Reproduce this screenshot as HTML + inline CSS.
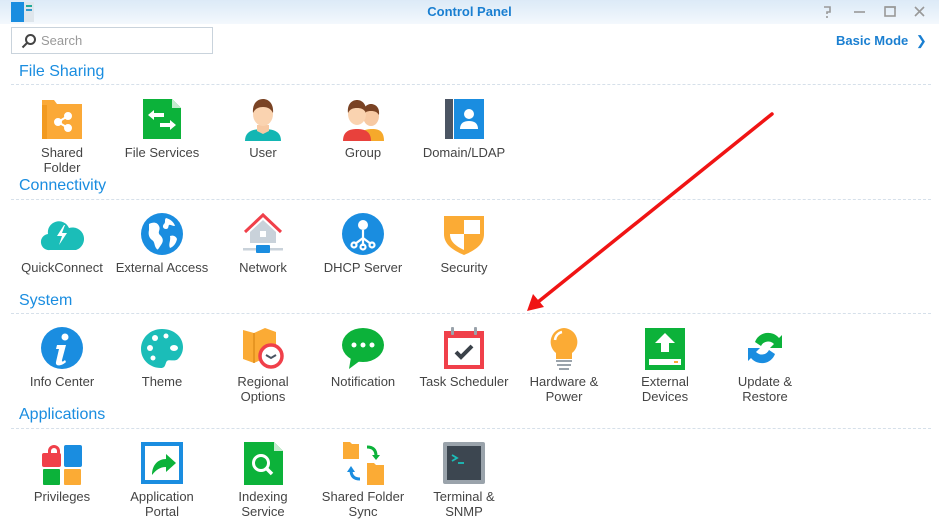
<!DOCTYPE html>
<html><head><meta charset="utf-8"><style>
*{margin:0;padding:0;box-sizing:border-box}
body{width:939px;height:531px;overflow:hidden;background:#fff;font-family:"Liberation Sans",sans-serif;position:relative}
.tb{position:absolute;left:0;top:0;width:939px;height:24px;background:linear-gradient(#dceaf7,#f3f8fd)}
.title{position:absolute;top:4px;left:0;width:939px;text-align:center;font-weight:bold;font-size:13px;color:#1a7fd1}
.search{position:absolute;left:11px;top:27px;width:202px;height:27px;border:1px solid #c9d3dc;background:#fff}
.search span{position:absolute;left:29px;top:5px;font-size:13px;color:#999}
.bm{position:absolute;left:836px;top:33px;font-size:13px;font-weight:bold;color:#1a7fd1}
.h{position:absolute;left:19px;font-size:16px;color:#1a8de0}
.line{position:absolute;left:11px;width:920px;border-top:1px dashed #d6e0ea}
.c{position:absolute;width:100px;text-align:center;font-size:13px;color:#444;line-height:15px}
.c svg{display:block;margin:0 auto 4px;width:44px;height:44px}
</style></head><body>
<div class="tb"></div>
<svg style="position:absolute;left:11px;top:2px" width="24" height="20"><rect x="0" y="0" width="13" height="20" fill="#1a8de0"/><rect x="13" y="0" width="10" height="20" fill="#dfe6ec"/><rect x="15" y="3" width="6" height="2" fill="#2a9"/><rect x="15" y="7" width="6" height="2" fill="#39c"/></svg>
<div class="title">Control Panel</div>
<svg style="position:absolute;left:820px;top:4px" width="110" height="16" fill="none" stroke="#999" stroke-width="1.6"><path d="M4 3h6v5H7v2M7 12v2"/><path d="M34 8h11"/><rect x="65" y="3" width="10" height="9"/><path d="M65 3h10v2"/><path d="M95 3l9 9M104 3l-9 9"/></svg>
<div class="search"><svg style="position:absolute;left:9px;top:5px" width="16" height="16" fill="none" stroke="#444" stroke-width="2"><circle cx="9.5" cy="6.5" r="4.5"/><path d="M6 10l-4.5 4.5"/></svg><span>Search</span></div>
<div class="bm">Basic Mode <span style="font-weight:normal;margin-left:4px">&#x276F;</span></div>

<div class="h" style="top:63px">File Sharing</div><div class="line" style="top:84px"></div>
<div class="h" style="top:177px">Connectivity</div><div class="line" style="top:199px"></div>
<div class="h" style="top:292px">System</div><div class="line" style="top:313px"></div>
<div class="h" style="top:406px">Applications</div><div class="line" style="top:428px"></div>

<!-- row1 -->
<div class="c" style="left:12px;top:97px"><svg viewBox="0 0 44 44"><path d="M2 3h12l3 4h25v35H2z" fill="#fba937"/><rect x="2" y="8" width="5" height="34" fill="#f29a20"/><g fill="#fff" stroke="#fff" stroke-width="2"><circle cx="18" cy="25" r="3"/><circle cx="28" cy="19" r="3"/><circle cx="28" cy="31" r="3"/><path d="M18 25l10-6M18 25l10 6"/></g></svg>Shared<br>Folder</div>
<div class="c" style="left:112px;top:97px"><svg viewBox="0 0 44 44"><path d="M3 2h29l9 9v31H3z" fill="#0cb23a"/><path d="M32 2v9h9" fill="#c5eccf"/><path d="M8 18l6-5v3h10v4H14v3zM36 28l-6-5v3H20v4h10v3z" fill="#fff"/></svg>File Services</div>
<div class="c" style="left:213px;top:97px"><svg viewBox="0 0 44 44"><path d="M4 44c0-10 8-12 18-12s18 2 18 12z" fill="#13b6b3"/><path d="M16 28h12v6l-6 3-6-3z" fill="#f7c9a3"/><ellipse cx="22" cy="17" rx="10" ry="12" fill="#fad3b0"/><path d="M12 16c-1-10 5-14 10-14s11 4 10 14c-2-4-5-6-10-6s-8 2-10 6z" fill="#7a4324"/></svg>User</div>
<div class="c" style="left:313px;top:97px"><svg viewBox="0 0 44 44"><path d="M18 44c0-10 6-12 13-12s12 2 12 12z" fill="#f6a92b"/><ellipse cx="30" cy="19" rx="8" ry="10" fill="#f7c9a3"/><path d="M22 18c0-8 4-11 8-11s9 3 8 11c-2-3-4-4-8-4s-6 1-8 4z" fill="#7a4324"/><path d="M2 44c0-10 7-12 14-12s14 2 14 12z" fill="#e8413c"/><ellipse cx="16" cy="17" rx="9" ry="11" fill="#fad3b0"/><path d="M7 16c-1-9 4-13 9-13s10 4 9 13c-2-4-5-5-9-5s-7 1-9 5z" fill="#7a4324"/></svg>Group</div>
<div class="c" style="left:414px;top:97px"><svg viewBox="0 0 44 44"><rect x="3" y="2" width="8" height="40" fill="#4b5563"/><rect x="12" y="2" width="30" height="40" fill="#1a8de0"/><circle cx="27" cy="17" r="5" fill="#fff"/><path d="M18 32c0-6 4-8 9-8s9 2 9 8z" fill="#fff"/></svg>Domain/LDAP</div>

<!-- row2 -->
<div class="c" style="left:12px;top:212px"><svg viewBox="0 0 44 44"><path d="M10 38a8 8 0 0 1-2-16a11 11 0 0 1 21-6a9 9 0 0 1 7 22z" fill="#1bbdb8"/><path d="M24 13l-7 11h5l-3 9 8-12h-5l3-8z" fill="#fff"/></svg>QuickConnect</div>
<div class="c" style="left:112px;top:212px"><svg viewBox="0 0 44 44"><circle cx="22" cy="22" r="21" fill="#1a8de0"/><path d="M9 12c4-2 8-2 10 2s-2 6 1 9 4 6 1 10-3 6-5 3-1-6-4-8-4-6-3-10zM26 6c4 1 8 4 9 8-3 0-5-2-6-1s0 4-3 4-4-3-2-5 0-4 2-6zM30 24c3-1 6 0 7 3-1 5-4 8-7 9-2-4 1-7 0-12z" fill="#fff"/></svg>External Access</div>
<div class="c" style="left:213px;top:212px"><svg viewBox="0 0 44 44"><path d="M9 20L22 8l13 12v11H9z" fill="#c9d2da"/><path d="M4 20L22 3l18 17" fill="none" stroke="#f0404a" stroke-width="3"/><rect x="19" y="19" width="6" height="6" fill="#fff"/><rect x="2" y="36" width="40" height="2.5" fill="#c9d2da"/><rect x="15" y="33" width="14" height="8" rx="1" fill="#1a8de0"/></svg>Network</div>
<div class="c" style="left:313px;top:212px"><svg viewBox="0 0 44 44"><circle cx="22" cy="22" r="21" fill="#1a8de0"/><g fill="none" stroke="#fff" stroke-width="2.2"><path d="M22 18v8M22 26l-8 6M22 26l8 6M22 26v8"/><circle cx="13" cy="33" r="2.5"/><circle cx="31" cy="33" r="2.5"/><circle cx="22" cy="35" r="2.5"/></g><circle cx="22" cy="13" r="5" fill="#fff"/></svg>DHCP Server</div>
<div class="c" style="left:414px;top:212px"><svg viewBox="0 0 44 44"><path d="M2 4h40v18c0 10-8 16-20 21C10 38 2 32 2 22z" fill="#fbab35"/><path d="M22 8h16v14H22zM8 22h14v16c-8-4-14-8-14-16z" fill="#fff"/></svg>Security</div>

<!-- row3 -->
<div class="c" style="left:12px;top:326px"><svg viewBox="0 0 44 44"><circle cx="22" cy="22" r="21" fill="#1a8de0"/><circle cx="25" cy="11" r="3.5" fill="#fff"/><path d="M17 19h9l-4 15c-.5 2 1 2 3 0l1 2c-4 4-11 5-10 0l3-13h-3z" fill="#fff"/></svg>Info Center</div>
<div class="c" style="left:112px;top:326px"><svg viewBox="0 0 44 44"><path d="M22 3C10 3 1 12 1 23s9 19 20 19c5 0 4-5 6-7s8 1 11-2 5-7 5-12C43 11 34 3 22 3z" fill="#1bbdb8"/><g fill="#fff"><circle cx="10" cy="22" r="3"/><circle cx="15" cy="12" r="3"/><circle cx="26" cy="10" r="2.5"/><ellipse cx="34" cy="22" rx="4" ry="3"/><circle cx="13" cy="32" r="2.5"/></g></svg>Theme</div>
<div class="c" style="left:213px;top:326px"><svg viewBox="0 0 44 44"><path d="M2 4l11 3 11-5 11 4v30l-11-4-11 5-11-4z" fill="#fbab35"/><path d="M13 7v30" stroke="#e08e1c" stroke-width="1.5"/><circle cx="30" cy="30" r="11" fill="#fff" stroke="#f0404a" stroke-width="3.5"/><path d="M25 29l5 3 5-3" fill="none" stroke="#4b5563" stroke-width="2"/></svg>Regional<br>Options</div>
<div class="c" style="left:313px;top:326px"><svg viewBox="0 0 44 44"><ellipse cx="22" cy="19" rx="21" ry="17" fill="#0cb23a"/><path d="M10 31l-2 12 12-9z" fill="#0cb23a"/><g fill="#fff"><circle cx="13" cy="19" r="2.5"/><circle cx="22" cy="19" r="2.5"/><circle cx="31" cy="19" r="2.5"/></g></svg>Notification</div>
<div class="c" style="left:414px;top:326px"><svg viewBox="0 0 44 44"><rect x="2" y="5" width="40" height="38" fill="#f0404a"/><rect x="6" y="12" width="32" height="27" fill="#fff"/><rect x="9" y="1" width="3" height="8" rx="1" fill="#9aa3ab"/><rect x="32" y="1" width="3" height="8" rx="1" fill="#9aa3ab"/><path d="M14 26l5 5 11-11" fill="none" stroke="#3a4149" stroke-width="4"/></svg>Task Scheduler</div>
<div class="c" style="left:514px;top:326px"><svg viewBox="0 0 44 44"><path d="M22 2a14 14 0 0 0-8 25v6h16v-6A14 14 0 0 0 22 2z" fill="#fbab35"/><path d="M13 14a9 9 0 0 1 7-8" fill="none" stroke="#fff" stroke-width="2.5"/><rect x="14" y="34" width="16" height="2" fill="#9aa3ab"/><rect x="15" y="38" width="14" height="2" fill="#9aa3ab"/><rect x="17" y="42" width="10" height="2" fill="#9aa3ab"/></svg>Hardware &amp;<br>Power</div>
<div class="c" style="left:615px;top:326px"><svg viewBox="0 0 44 44"><rect x="2" y="2" width="40" height="42" fill="#0cb23a"/><path d="M22 7l10 10h-6v9h-8v-9h-6z" fill="#fff"/><rect x="6" y="33" width="32" height="6" fill="#fff"/><rect x="31" y="35" width="4" height="2" fill="#fbab35"/></svg>External<br>Devices</div>
<div class="c" style="left:715px;top:326px"><svg viewBox="0 0 44 44"><path d="M10 16a14 14 0 0 1 24-4l3-3v13h-12l4-4a8 8 0 0 0-13 2z" fill="#0cb23a" transform="translate(2 0)"/><path d="M34 28a14 14 0 0 1-24 4l-3 3V22h12l-4 4a8 8 0 0 0 13-2z" fill="#1a8de0" transform="translate(-2 0)"/></svg>Update &amp;<br>Restore</div>

<!-- row4 -->
<div class="c" style="left:12px;top:441px"><svg viewBox="0 0 44 44"><path d="M8 10a6 6 0 0 1 12 0v3h-3v-3a3 3 0 0 0-6 0v3H8z" fill="#f0404a"/><rect x="2" y="12" width="19" height="14" rx="2" fill="#f0404a"/><rect x="24" y="4" width="18" height="22" rx="2" fill="#1a8de0"/><rect x="3" y="28" width="17" height="16" rx="1" fill="#0cb23a"/><rect x="24" y="28" width="17" height="16" rx="1" fill="#fbab35"/></svg>Privileges</div>
<div class="c" style="left:112px;top:441px"><svg viewBox="0 0 44 44"><rect x="1" y="1" width="42" height="42" fill="#1a8de0"/><rect x="5" y="5" width="34" height="34" fill="#fff"/><path d="M12 34c0-10 6-16 14-16v-5l10 9-10 9v-5c-6 0-10 3-14 8z" fill="#0cb23a"/></svg>Application<br>Portal</div>
<div class="c" style="left:213px;top:441px"><svg viewBox="0 0 44 44"><path d="M3 1h30l9 9v34H3z" fill="#0cb23a"/><path d="M33 1v9h9" fill="#c5eccf"/><circle cx="20" cy="22" r="7.5" fill="none" stroke="#fff" stroke-width="3"/><path d="M25 27l6 6" stroke="#fff" stroke-width="3.5"/></svg>Indexing<br>Service</div>
<div class="c" style="left:313px;top:441px"><svg viewBox="0 0 44 44"><path d="M2 1h7l2 2h7v15H2z" fill="#fbab35"/><path d="M26 22h7l2 2h8v20H26z" fill="#fbab35"/><path d="M26 6c6 0 9 3 9 9" fill="none" stroke="#0cb23a" stroke-width="3"/><path d="M31 14h8l-4 5z" fill="#0cb23a"/><path d="M19 38c-6 0-9-3-9-9" fill="none" stroke="#1a8de0" stroke-width="3"/><path d="M6 31l4-6 4 6z" fill="#1a8de0"/></svg>Shared Folder<br>Sync</div>
<div class="c" style="left:414px;top:441px"><svg viewBox="0 0 44 44"><rect x="1" y="1" width="42" height="42" rx="2" fill="#9aa3ab"/><rect x="5" y="5" width="34" height="34" fill="#3c4650"/><path d="M10 14l5 3-5 3" fill="none" stroke="#1bbdb8" stroke-width="1.8"/><path d="M16 22h6" stroke="#1bbdb8" stroke-width="1.8"/></svg>Terminal &amp;<br>SNMP</div>

<!-- red arrow -->
<svg style="position:absolute;left:0;top:0" width="939" height="531"><path d="M772 114L538 302" stroke="#f01414" stroke-width="3.5" stroke-linecap="round"/><path d="M527 311l6-17 11 13z" fill="#f01414"/></svg>
</body></html>
